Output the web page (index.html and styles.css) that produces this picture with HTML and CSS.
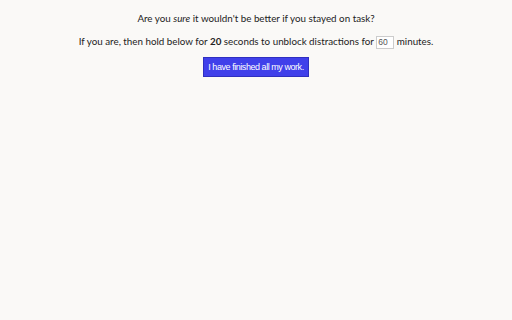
FILE: index.html
```html
<!DOCTYPE html>
<html lang="en">
<head>
    <meta charset="UTF-8">
    <title>Are you sure?</title>
    <link rel="stylesheet" href="styles.css">
</head>
<body>
    <main class="prompt">
        <p class="prompt-question">Are you <em>sure</em> it wouldn't be better if you stayed on task?</p>
        <p class="prompt-detail">If you are, then hold below for <strong>20</strong> seconds to unblock distractions for <input class="prompt-minutes" type="text" value="60"> minutes.</p>
        <button class="prompt-button">I have finished all my work.</button>
    </main>
</body>
</html>
```

FILE: styles.css
```css
body {
    margin: 0;
    background-color: #faf9f7;
    font-family: Lato, sans-serif;
    font-size: 9.8px;
    color: #222;
}

.prompt {
    display: flex;
    flex-direction: column;
    align-items: center;
    padding-top: 11px;
}

.prompt p {
    margin: 0 0 8px 0;
    line-height: 15px;
}

.prompt-minutes {
    width: 14px;
    height: 11px;
    padding: 0 1px;
    border: 1px solid #ccc;
    font-family: "Liberation Sans", sans-serif;
    font-size: 8.5px;
    color: #555;
    background: #fff;
}

.prompt-button {
    margin-top: 0;
    padding: 4px 4px;
    background-color: #4040ea;
    color: white;
    border: 1px solid #2f2fc0;
    font-family: "Liberation Sans", sans-serif;
    font-size: 9px;
    letter-spacing: -0.45px;
    cursor: pointer;
}
```
